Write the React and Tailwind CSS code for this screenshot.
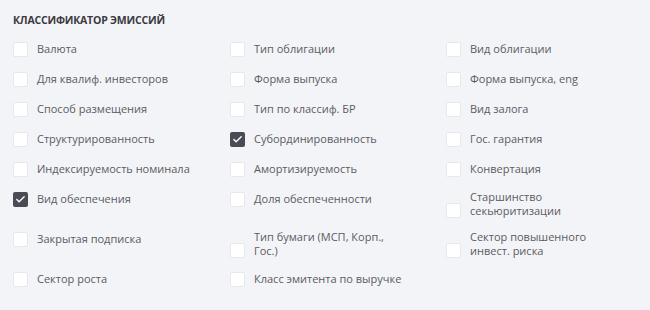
import { Check } from "lucide-react";

const ITEMS = [
  { label: "Валюта" },
  { label: "Тип облигации" },
  { label: "Вид облигации" },
  { label: "Для квалиф. инвесторов" },
  { label: "Форма выпуска" },
  { label: "Форма выпуска, eng" },
  { label: "Способ размещения" },
  { label: "Тип по классиф. БР" },
  { label: "Вид залога" },
  { label: "Структурированность" },
  { label: "Субординированность", checked: true },
  { label: "Гос. гарантия" },
  { label: "Индексируемость номинала" },
  { label: "Амортизируемость" },
  { label: "Конвертация" },
  { label: "Вид обеспечения", checked: true },
  { label: "Доля обеспеченности" },
  { lines: ["Старшинство", "секьюритизации"] },
  { label: "Закрытая подписка" },
  { lines: ["Тип бумаги (МСП, Корп.,", "Гос.)"] },
  { lines: ["Сектор повышенного", "инвест. риска"] },
  { label: "Сектор роста" },
  { label: "Класс эмитента по выручке" },
];

function Box({ checked }) {
  return checked ? (
    <span className="flex h-[15px] w-[15px] shrink-0 items-center justify-center rounded-[2px] bg-[#4a4b55]">
      <Check className="h-[11px] w-[11px] text-white" strokeWidth={3} />
    </span>
  ) : (
    <span className="h-[15px] w-[15px] shrink-0 rounded-[2px] border border-[#e6e8ee] bg-white" />
  );
}

export default function App() {
  return (
    <div
      className="h-[310px] w-[650px] bg-[#f3f4f8] pl-[13px] pt-[13px]"
      style={{ fontFamily: "'Open Sans', 'Noto Sans', sans-serif" }}
    >
      <h2 className="text-[10.5px] font-bold uppercase leading-[14px] tracking-[-0.2px] text-[#3a3a3f]">
        Классификатор эмиссий
      </h2>
      <div className="mt-[13px] grid grid-cols-[217px_216px_1fr] items-start gap-y-[12px]">
        {ITEMS.map((it, i) =>
          it.lines ? (
            <div key={i} className="flex items-end gap-[9px]">
              <Box checked={it.checked} />
              <span className="text-[11px] leading-[14px] text-[#5b5b61]">
                {it.lines[0]}
                <br />
                {it.lines[1]}
              </span>
            </div>
          ) : (
            <div key={i} className="flex h-[18px] items-center gap-[9px]">
              <Box checked={it.checked} />
              <span className="whitespace-nowrap text-[11px] leading-[18px] text-[#5b5b61]">
                {it.label}
              </span>
            </div>
          )
        )}
      </div>
    </div>
  );
}
